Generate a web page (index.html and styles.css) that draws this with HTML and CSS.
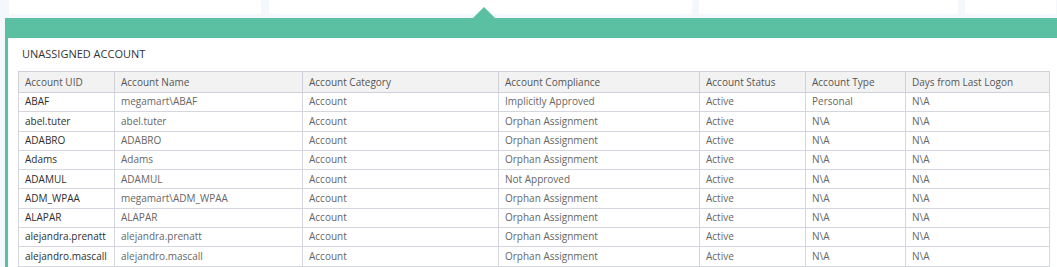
FILE: index.html
```html
<!DOCTYPE html>
<html>
<head>
<meta charset="utf-8">
<link rel="stylesheet" href="styles.css">
</head>
<body>
<div class="page">
  <div class="card-strip">
    <div class="card card-a"></div>
    <div class="card card-b"></div>
    <div class="card card-c"></div>
    <div class="card card-d"></div>
  </div>
  <section class="panel">
    <div class="panel-bar"><span class="pointer"></span></div>
    <div class="panel-body">
      <h2 class="panel-title">UNASSIGNED ACCOUNT</h2>
      <table class="grid">
        <colgroup>
          <col class="c1"><col class="c2"><col class="c3"><col class="c4"><col class="c5"><col class="c6"><col class="c7">
        </colgroup>
        <thead>
          <tr><th>Account UID</th><th>Account Name</th><th>Account Category</th><th>Account Compliance</th><th>Account Status</th><th>Account Type</th><th>Days from Last Logon</th></tr>
        </thead>
        <tbody>
          <tr><td class="uid">ABAF</td><td>megamart\ABAF</td><td>Account</td><td>Implicitly Approved</td><td>Active</td><td>Personal</td><td>N\A</td></tr>
          <tr><td class="uid">abel.tuter</td><td>abel.tuter</td><td>Account</td><td>Orphan Assignment</td><td>Active</td><td>N\A</td><td>N\A</td></tr>
          <tr><td class="uid">ADABRO</td><td>ADABRO</td><td>Account</td><td>Orphan Assignment</td><td>Active</td><td>N\A</td><td>N\A</td></tr>
          <tr><td class="uid">Adams</td><td>Adams</td><td>Account</td><td>Orphan Assignment</td><td>Active</td><td>N\A</td><td>N\A</td></tr>
          <tr><td class="uid">ADAMUL</td><td>ADAMUL</td><td>Account</td><td>Not Approved</td><td>Active</td><td>N\A</td><td>N\A</td></tr>
          <tr><td class="uid">ADM_WPAA</td><td>megamart\ADM_WPAA</td><td>Account</td><td>Orphan Assignment</td><td>Active</td><td>N\A</td><td>N\A</td></tr>
          <tr><td class="uid">ALAPAR</td><td>ALAPAR</td><td>Account</td><td>Orphan Assignment</td><td>Active</td><td>N\A</td><td>N\A</td></tr>
          <tr><td class="uid">alejandra.prenatt</td><td>alejandra.prenatt</td><td>Account</td><td>Orphan Assignment</td><td>Active</td><td>N\A</td><td>N\A</td></tr>
          <tr><td class="uid">alejandro.mascall</td><td>alejandro.mascall</td><td>Account</td><td>Orphan Assignment</td><td>Active</td><td>N\A</td><td>N\A</td></tr>
          <tr class="filler"><td></td><td></td><td></td><td></td><td></td><td></td><td></td></tr>
        </tbody>
      </table>
    </div>
  </section>
</div>
</body>
</html>
```

FILE: styles.css
```css
html, body {
  margin: 0;
  padding: 0;
  overflow: hidden;
  background: #f4f7fb;
}

.page {
  font-family: "Open Sans", "Liberation Sans", sans-serif;
  width: 1057px;
}

.card-strip {
  display: grid;
  grid-template-columns: 252px 424px 259px 91px;
  column-gap: 7px;
  padding-left: 9px;
  height: 14px;
}

.card {
  background: #ffffff;
}

.card-b {
  margin-left: 1px;
}

.panel {
  margin-top: 4px;
  margin-left: 5px;
}

.panel-bar {
  position: relative;
  height: 20px;
  background: #5ac0a1;
}

.pointer {
  position: absolute;
  left: 468px;
  top: -11px;
  width: 0;
  height: 0;
  border-left: 11px solid transparent;
  border-right: 11px solid transparent;
  border-bottom: 11px solid #5ac0a1;
}

.panel-body {
  background: #ffffff;
  border-left: 3px solid #5ac0a1;
  padding: 0 0 20px 10px;
}

.panel-title {
  margin: 0;
  padding: 7px 0 0 4px;
  height: 26px;
  font-size: 11px;
  font-weight: 400;
  line-height: 17px;
  color: #333333;
}

.grid {
  border-collapse: collapse;
  table-layout: fixed;
  width: 1031px;
  font-size: 10px;
}

.c1 { width: 96px; }
.c2 { width: 188px; }
.c3 { width: 196px; }
.c4 { width: 201px; }
.c5 { width: 106px; }
.c6 { width: 100px; }
.c7 { width: 144px; }

.grid th {
  background: #f2f2f2;
  color: #555555;
  font-weight: 400;
  text-align: left;
  border: 1px solid #d0d0d8;
  padding: 2px 6px;
  height: 16px;
  line-height: 15px;
  white-space: nowrap;
  overflow: hidden;
}

.grid td {
  color: #666666;
  border: 1px solid #d6d6de;
  padding: 1px 6px;
  height: 16.3px;
  line-height: 15.6px;
  white-space: nowrap;
  overflow: hidden;
}

.grid td.uid {
  color: #2e2e2e;
}
```
